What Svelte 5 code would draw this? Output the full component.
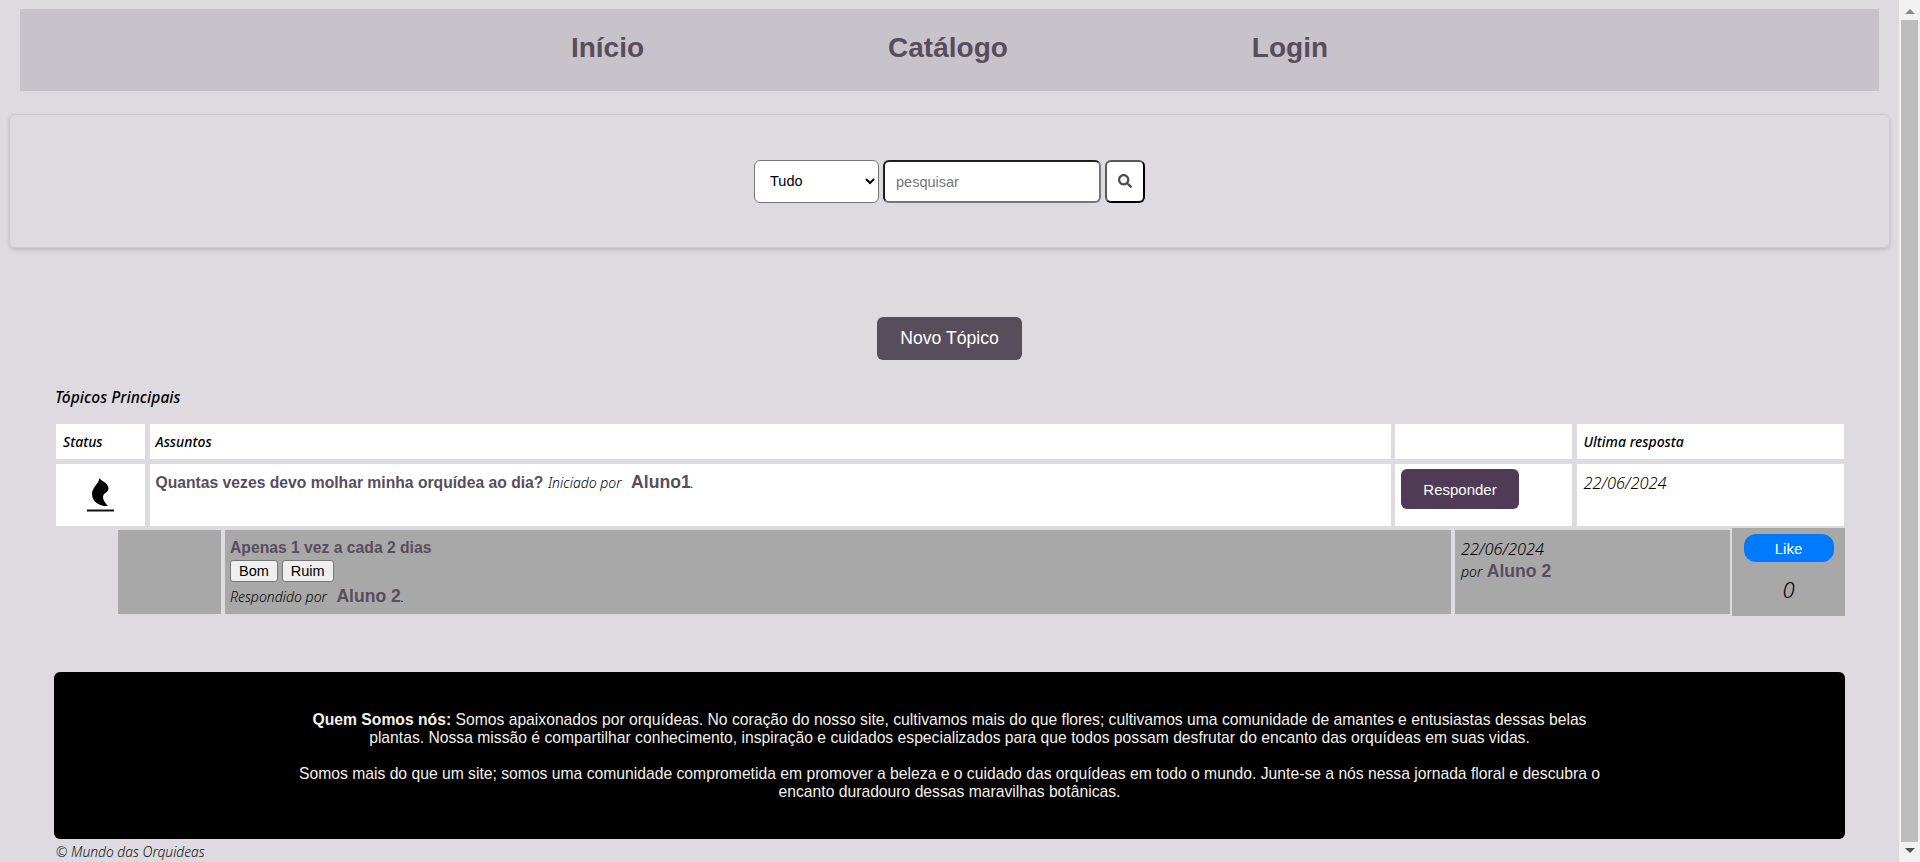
<script lang="ts">
	let busca = $state('');
	let likes = $state(0);
</script>

<div class="page">
	<main class="content">
		<nav class="menu">
			<a href="#inicio">Início</a>
			<a href="#catalogo">Catálogo</a>
			<a href="#login">Login</a>
		</nav>

		<section class="search-card">
			<form class="search-form" onsubmit={(e) => e.preventDefault()}>
				<select class="search-type">
					<option>Tudo</option>
				</select>
				<input class="search-input" type="text" placeholder="pesquisar" bind:value={busca} />
				<button class="search-btn" aria-label="Buscar">
					<svg viewBox="0 0 512 512" width="14" height="14">
						<path
							fill="#4a4a5a"
							d="M505 442.7L405.3 343c-4.5-4.5-10.6-7-17-7H372c27.6-35.3 44-79.7 44-128C416 93.1 322.9 0 208 0S0 93.1 0 208s93.1 208 208 208c48.3 0 92.7-16.4 128-44v16.3c0 6.4 2.5 12.5 7 17l99.7 99.7c9.4 9.4 24.6 9.4 33.9 0l28.3-28.3c9.4-9.4 9.4-24.6.1-34zM208 336c-70.7 0-128-57.2-128-128 0-70.7 57.2-128 128-128 70.7 0 128 57.2 128 128 0 70.7-57.2 128-128 128z"
						/>
					</svg>
				</button>
			</form>
		</section>

		<div class="new-topic">
			<button class="new-topic-btn">Novo Tópico</button>
		</div>

		<h2 class="section-title">Tópicos Principais</h2>

		<!-- Topics table -->
		<div class="topics">
			<div class="cell head">Status</div>
			<div class="cell head wide">Assuntos</div>
			<div class="cell head"></div>
			<div class="cell head">Ultima resposta</div>

			<div class="cell status">
				<svg viewBox="0 0 27 34" width="27" height="34">
					<path
						d="M12.5 0C14 3 21.5 5 21.5 10.5C21.5 14.5 16 15 16 19C16 22 18 25 21 28C15 28.5 5 25.5 5 16C5 9 12 6 12.5 0Z"
						fill="#000"
					/>
					<rect x="0" y="31.5" width="27" height="2" fill="#111" />
				</svg>
			</div>
			<div class="cell subject wide">
				<strong class="question">Quantas vezes devo molhar minha orquídea ao dia?</strong>
				<em class="by">Iniciado por</em>
				<strong class="author first">Aluno1</strong><em class="by">.</em>
			</div>
			<div class="cell action">
				<button class="reply-btn">Responder</button>
			</div>
			<div class="cell date">22/06/2024</div>
		</div>

		<!-- Reply row -->
		<div class="reply">
			<div class="reply-cell"></div>
			<div class="reply-cell reply-body">
				<strong class="question">Apenas 1 vez a cada 2 dias</strong>
				<div class="votes">
					<button class="vote">Bom</button>
					<button class="vote">Ruim</button>
				</div>
				<div class="reply-by">
					<em class="by">Respondido por</em>
					<strong class="author first">Aluno 2</strong><em class="by">.</em>
				</div>
			</div>
			<div class="reply-cell reply-date">
				<div class="date-text">22/06/2024</div>
				<div class="date-by"><em class="by">por</em> <strong class="author">Aluno 2</strong></div>
			</div>
			<div class="like-cell">
				<button class="like-btn" onclick={() => (likes += 1)}>Like</button>
				<span class="like-count">{likes}</span>
			</div>
		</div>

		<section class="about">
			<p>
				<strong>Quem Somos nós:</strong> Somos apaixonados por orquídeas. No coração do nosso site,
				cultivamos mais do que flores; cultivamos uma comunidade de amantes e entusiastas dessas
				belas plantas. Nossa missão é compartilhar conhecimento, inspiração e cuidados
				especializados para que todos possam desfrutar do encanto das orquídeas em suas vidas.
				<br /><br />
				Somos mais do que um site; somos uma comunidade comprometida em promover a beleza e o cuidado
				das orquídeas em todo o mundo. Junte-se a nós nessa jornada floral e descubra o encanto
				duradouro dessas maravilhas botânicas.
			</p>
		</section>

		<footer class="copy">© <em>Mundo das Orquideas</em></footer>
	</main>

	<!-- Scrollbar as in the captured window -->
	<aside class="scrollbar">
		<span class="arrow up"></span>
		<span class="thumb"></span>
		<span class="arrow down"></span>
	</aside>
</div>

<style>
	:global(body) {
		background: #dddbe0;
		font-family: 'Liberation Sans', Arial, sans-serif;
	}

	.page {
		display: flex;
		height: 862px;
		overflow: hidden;
	}

	.content {
		flex: 1;
		min-width: 0;
		padding-top: 9px;
	}

	.menu {
		display: flex;
		justify-content: center;
		align-items: center;
		gap: 244px;
		height: 82px;
		box-sizing: border-box;
		padding-bottom: 4px;
		margin: 0 20px;
		background: #c8c3ca;
	}

	.menu a {
		font-size: 28px;
		font-weight: bold;
		color: #574e5c;
		text-decoration: none;
	}

	.search-card {
		display: flex;
		justify-content: center;
		align-items: center;
		height: 134px;
		box-sizing: border-box;
		margin: 23px 9px 0;
		border: 1px solid #cdcad1;
		border-radius: 6px;
		box-shadow: 0 2px 4px rgba(0, 0, 0, 0.15);
	}

	.search-form {
		display: flex;
		gap: 4px;
		height: 43px;
	}

	.search-type {
		width: 125px;
		padding: 0 11px;
		background-color: #fff;
		border: 1px solid #767676;
		border-radius: 6px;
		font-family: inherit;
		font-size: 14.5px;
		color: #000;
	}

	.search-input {
		width: 218px;
		box-sizing: border-box;
		padding: 2px 11px 0;
		background: #fff;
		border-width: 2px;
		border-style: solid;
		border-color: #1e1e1e #767676 #767676 #1e1e1e;
		border-radius: 6px;
		font-family: inherit;
		font-size: 14.5px;
		outline: none;
	}

	.search-input::placeholder {
		color: #757575;
	}

	.search-btn {
		display: flex;
		align-items: center;
		justify-content: center;
		width: 40px;
		padding: 0;
		background: #fff;
		border-width: 2px;
		border-style: solid;
		border-color: #5a5a5a #000 #000 #5a5a5a;
		border-radius: 6px;
	}

	.new-topic {
		display: flex;
		justify-content: center;
		margin-top: 69px;
	}

	.new-topic-btn {
		width: 145px;
		height: 43px;
		background: #574e5c;
		border: none;
		border-radius: 6px;
		color: #fff;
		font-family: inherit;
		font-size: 17.6px;
	}

	.section-title {
		margin: 27px 0 0 55px;
		height: 20px;
		line-height: 20px;
		font-family: 'Noto Sans', sans-serif;
		font-size: 15.6px;
		font-style: italic;
		font-weight: 500;
		color: #000;
	}

	.topics {
		display: grid;
		grid-template-columns: 89px 1241px 177px 267px;
		column-gap: 4.5px;
		row-gap: 5px;
		grid-template-rows: 35px 62px;
		margin: 17px 0 0 56px;
	}

	.cell {
		background: #fff;
		box-sizing: border-box;
		padding: 0 7px;
	}

	.cell.wide {
		padding-left: 6px;
	}

	.head {
		display: flex;
		align-items: center;
		font-family: 'Noto Sans', sans-serif;
		font-size: 14px;
		font-style: italic;
		font-weight: 500;
		color: #000;
	}

	.status {
		display: flex;
		justify-content: center;
		padding-top: 14px;
	}

	.subject {
		padding-top: 8px;
	}

	.question {
		font-size: 15.7px;
		color: #574e5c;
	}

	.by {
		font-family: 'Noto Sans', sans-serif;
		font-size: 14px;
		font-weight: 300;
		font-style: italic;
		color: #000;
	}

	.author {
		font-size: 17.6px;
		color: #574e5c;
	}

	.author.first {
		margin-left: 5px;
	}

	.action {
		padding: 5px 6px;
	}

	.reply-btn {
		width: 118px;
		height: 40px;
		background: #4f3b55;
		border: none;
		border-radius: 6px;
		color: #fff;
		font-family: inherit;
		font-size: 15px;
	}

	.date {
		padding-top: 7px;
		font-family: 'Noto Sans', sans-serif;
		font-size: 16.4px;
		font-weight: 300;
		font-style: italic;
		color: #000;
	}

	.reply {
		display: grid;
		grid-template-columns: 103px 1226px 275px 111px;
		column-gap: 4px;
		height: 88px;
		margin: 2px 0 0 118px;
	}

	.reply-cell {
		margin: 2px 0;
		background: #a8a8a8;
	}

	.reply-body {
		padding: 9px 6px 0 5px;
		box-sizing: border-box;
	}

	.votes {
		display: flex;
		gap: 4px;
		margin-top: 3px;
	}

	.vote {
		height: 22px;
		padding: 0 8px;
		background: #efefef;
		border: 1px solid #767676;
		border-radius: 3px;
		font-family: inherit;
		font-size: 14.5px;
		color: #000;
	}

	.reply-by {
		margin-top: 4px;
	}

	.reply-date {
		padding: 7px 6px 0;
		box-sizing: border-box;
	}

	.date-text {
		font-family: 'Noto Sans', sans-serif;
		font-size: 16.4px;
		font-weight: 300;
		font-style: italic;
		color: #000;
	}

	.date-by {
		margin-top: 1px;
	}

	.like-cell {
		display: flex;
		flex-direction: column;
		align-items: center;
		margin-left: -2px;
		padding-top: 6px;
		background: #a8a8a8;
	}

	.like-btn {
		width: 90px;
		height: 28px;
		background: #007bff;
		border: none;
		border-radius: 12px;
		color: #fff;
		font-family: inherit;
		font-size: 15px;
	}

	.like-count {
		margin-top: 12px;
		font-family: 'Noto Sans', sans-serif;
		font-size: 22px;
		font-weight: 300;
		font-style: italic;
		color: #000;
	}

	.about {
		height: 167px;
		box-sizing: border-box;
		margin: 56px 54px 0;
		padding: 39px 236px 0;
		background: #000;
		border-radius: 6px;
		color: #f5f1ea;
		font-size: 15.7px;
		line-height: 18px;
		text-align: center;
	}

	.about p {
		margin: 0;
	}

	.copy {
		margin: 3px 0 0 56px;
		font-family: 'Noto Sans', sans-serif;
		font-size: 13.8px;
		font-weight: 300;
		color: #111;
	}

	.scrollbar {
		display: flex;
		flex-direction: column;
		align-items: center;
		width: 21px;
		background: #f1f1f1;
	}

	.thumb {
		flex: 1;
		width: 17px;
		margin: 6px 0;
		background: #bdbdbd;
	}

	.arrow {
		width: 0;
		height: 0;
		border-left: 5px solid transparent;
		border-right: 5px solid transparent;
	}

	.arrow.up {
		margin-top: 9px;
		border-bottom: 5px solid #8a8a8a;
	}

	.arrow.down {
		margin-bottom: 9px;
		border-top: 5px solid #505050;
	}
</style>
